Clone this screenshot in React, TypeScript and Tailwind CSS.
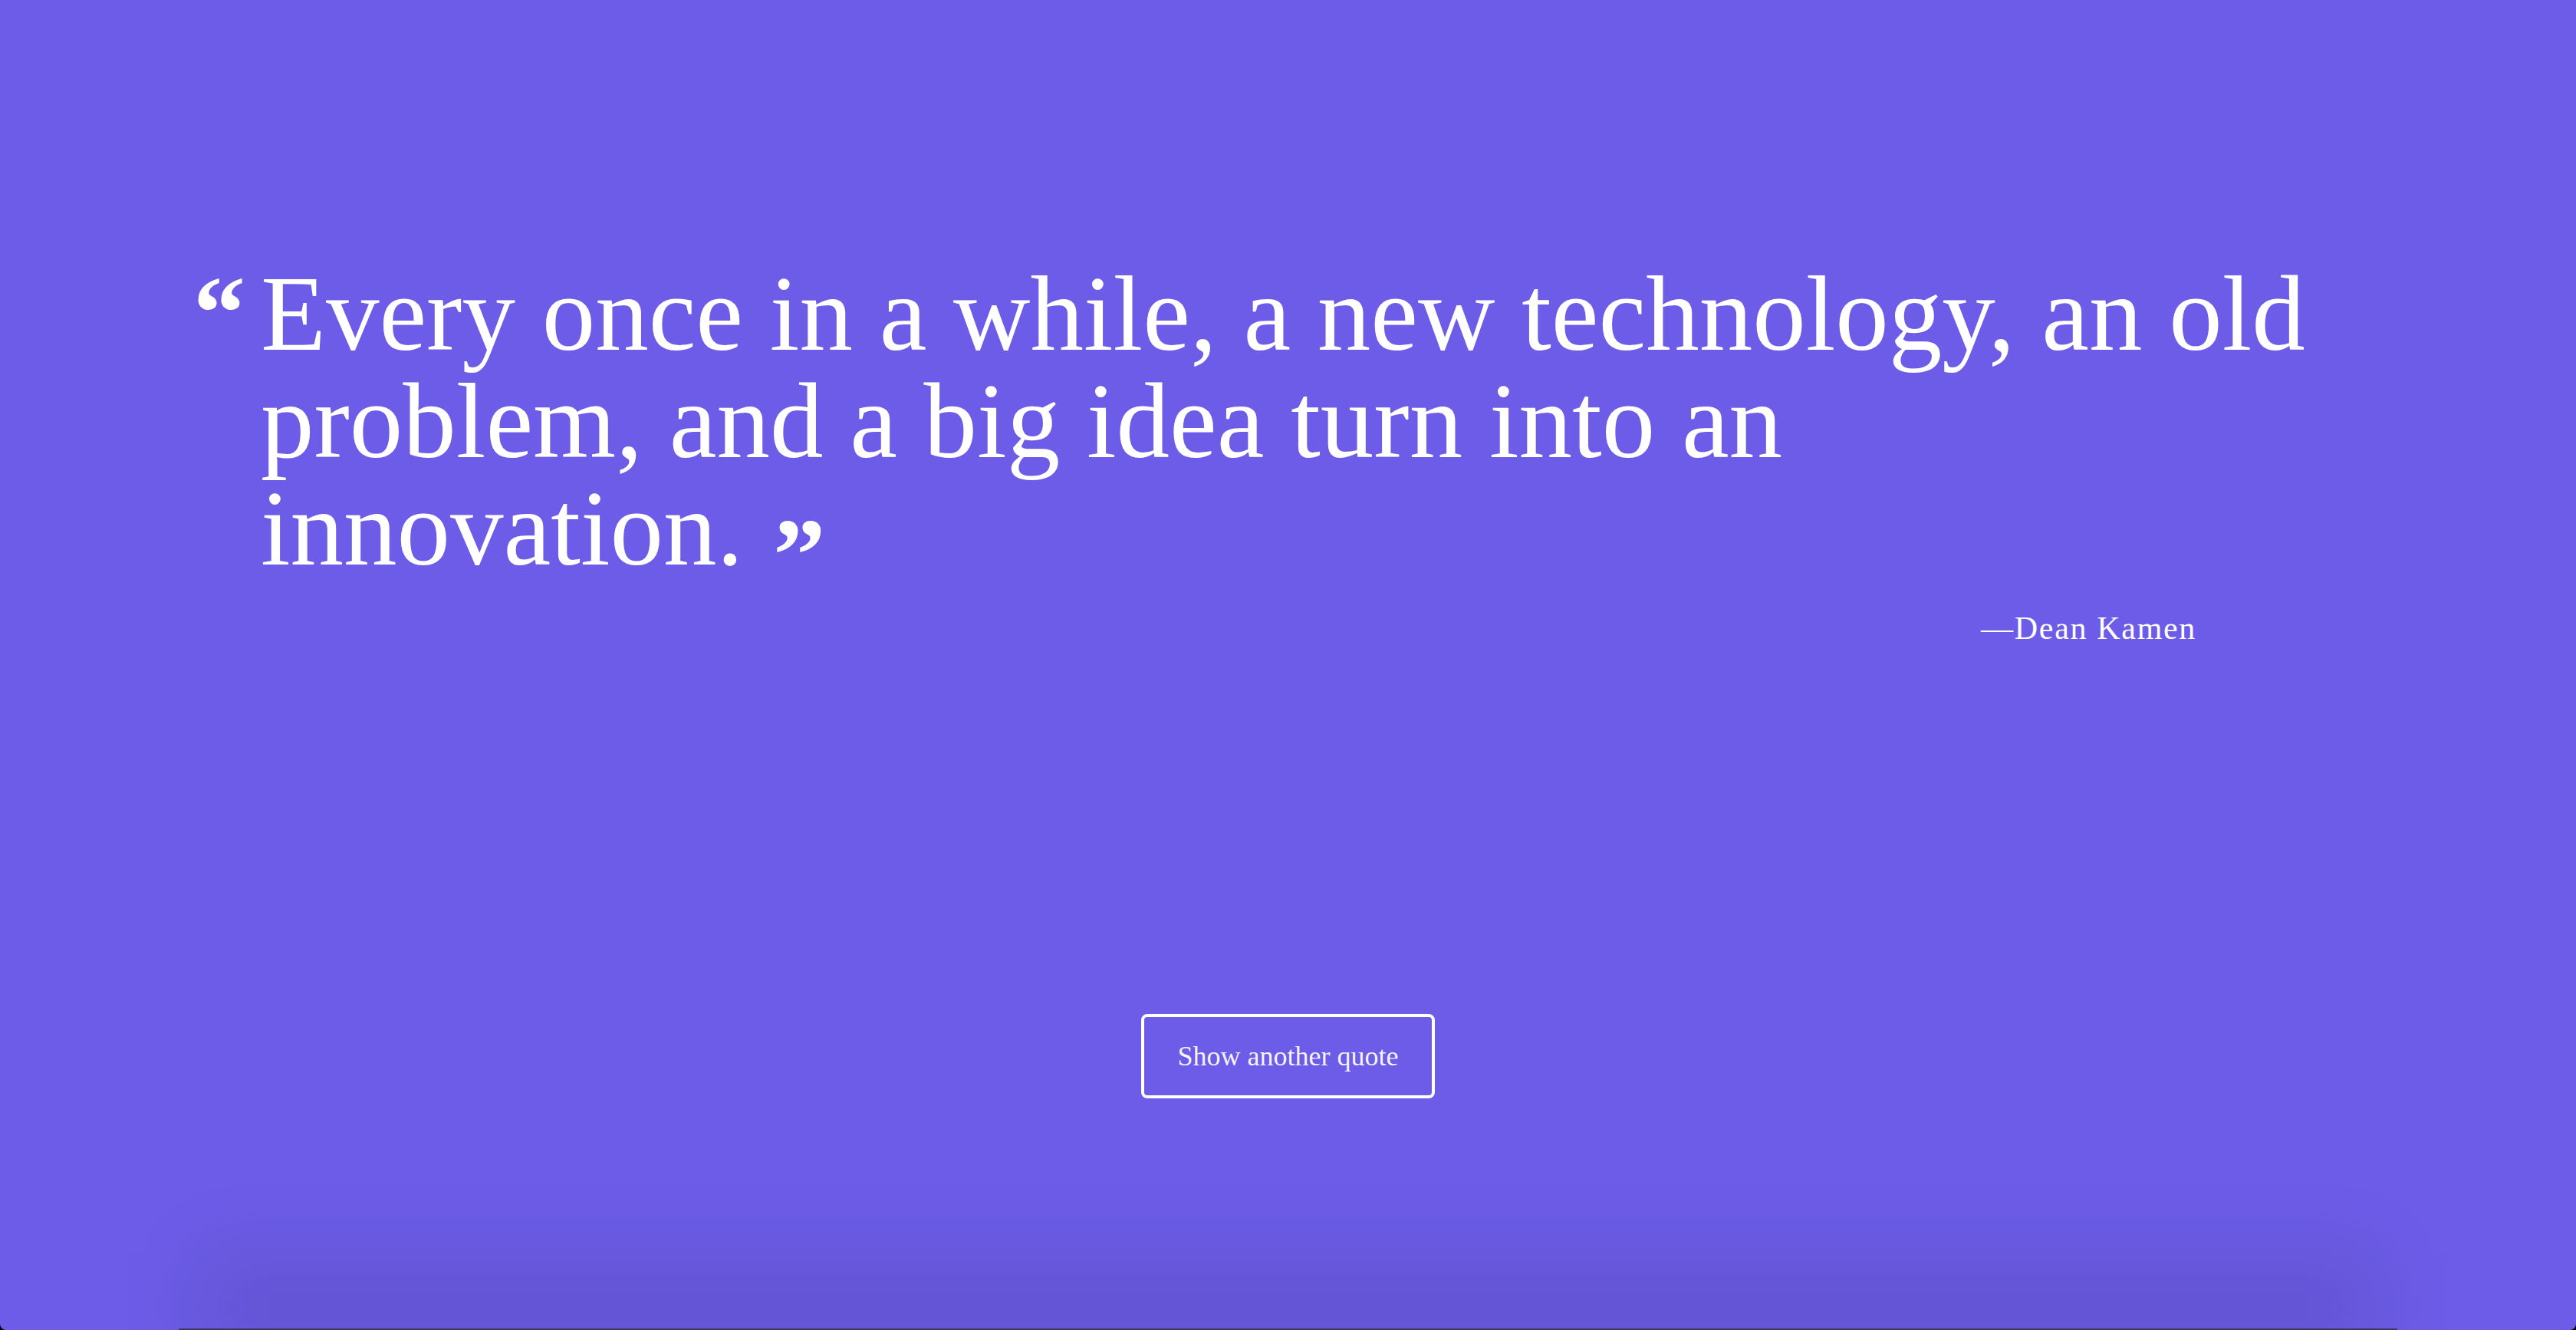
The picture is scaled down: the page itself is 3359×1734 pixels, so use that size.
import { useState } from 'react'

const quotes = [
  {
    text: 'Every once in a while, a new technology, an old problem, and a big idea turn into an innovation.',
    author: 'Dean Kamen',
  },
  {
    text: 'The best way to predict the future is to invent it.',
    author: 'Alan Kay',
  },
]

export default function App() {
  const [index, setIndex] = useState(0)
  const quote = quotes[index]

  return (
    <div className="min-h-screen bg-black">
      <main className="relative flex h-[1734px] flex-col overflow-hidden rounded-b-[8px] bg-[#6c5ce7] pt-[339px] font-['Liberation_Serif','Times_New_Roman',serif] text-white">
        {/* quote + author */}
        <figure className="ml-[252px] flex flex-col self-start">
          <blockquote className="flex gap-[20px]">
            <span className="text-[136px] font-bold leading-none">“</span>
            <p className="w-[2720px] text-[139px] leading-[140px]">
              {quote.text}
              <span className="ml-[39px] align-[-33px] text-[136px] font-bold leading-[0]">”</span>
            </p>
          </blockquote>
          <figcaption className="mt-[29px] mr-[196px] self-end text-[42px] leading-[63px] tracking-[0.04em]">
            —{quote.author}
          </figcaption>
        </figure>

        <button
          onClick={() => setIndex((index + 1) % quotes.length)}
          className="mt-[471px] self-center rounded-[8px] border-4 border-white px-[44px] py-[24px] text-[36px] leading-[54px] text-white/95"
        >
          Show another quote
        </button>

        {/* bottom shading of the window edge */}
        <div className="pointer-events-none absolute inset-x-[260px] -bottom-[40px] h-[140px] bg-black/8 blur-[50px]" />
        <div className="pointer-events-none absolute inset-x-[233px] bottom-0 h-[2px] bg-[#3d3961]" />
      </main>
    </div>
  )
}
